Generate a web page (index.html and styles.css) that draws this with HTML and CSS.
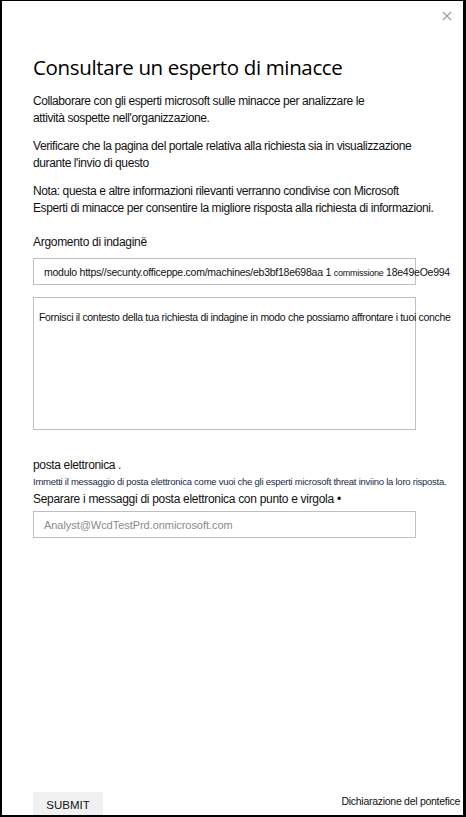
FILE: index.html
```html
<!DOCTYPE html>
<html lang="it">
<head>
<meta charset="utf-8">
<link rel="stylesheet" href="styles.css">
</head>
<body>
<div class="dialog">
  <div class="close-row">
    <svg class="close" width="10" height="10" viewBox="0 0 10 10"><path d="M1 1L9 9M9 1L1 9" stroke="#9a9a9a" stroke-width="1.1" fill="none"/></svg>
  </div>
  <h1 class="title">Consultare un esperto di minacce</h1>
  <p class="para p1">Collaborare con gli esperti microsoft sulle minacce per analizzare le<br>attività sospette nell'organizzazione.</p>
  <p class="para">Verificare che la pagina del portale relativa alla richiesta sia in visualizzazione<br>durante l'invio di questo</p>
  <p class="para">Nota: questa e altre informazioni rilevanti verranno condivise con Microsoft<br>Esperti di minacce per consentire la migliore risposta alla richiesta di informazioni.</p>
  <div class="label">Argomento di indaginë</div>
  <div class="field"><span class="field-text">modulo https//secunty.officeppe.com/machines/eb3bf18e698aa 1 <span class="tiny">commissione</span> 18e49eOe994</span></div>
  <div class="area"><span class="area-text">Fornisci il contesto della tua richiesta di indagine in modo che possiamo affrontare i tuoi conche</span></div>
  <div class="email-label">posta elettronica .</div>
  <div class="hint">Immetti il messaggio di posta elettronica come vuoi che gli esperti microsoft threat inviino la loro risposta.</div>
  <div class="sep">Separare i messaggi di posta elettronica con punto e virgola •</div>
  <div class="field email"><span class="placeholder">Analyst@WcdTestPrd.onmicrosoft.com</span></div>
  <div class="footer">
    <div class="submit">SUBMIT</div>
    <div class="privacy">Dichiarazione del pontefice</div>
  </div>
</div>
</body>
</html>
```
FILE: styles.css
```css
html, body { margin: 0; padding: 0; background: #fff; }
body { font-family: "Liberation Sans", Arial, sans-serif; color: #111; }
.dialog {
  box-sizing: border-box;
  width: 466px;
  height: 817px;
  border: 1px solid #000;
  border-left-width: 2px;
  border-right-width: 3px;
  border-bottom-width: 2px;
  padding: 0 0 0 31px;
  display: flex;
  flex-direction: column;
  overflow: hidden;
}
.close-row { display: flex; justify-content: flex-end; padding: 10px 11px 0 0; height: 12px; }
.title { font-family: "Open Sans", sans-serif; font-weight: 400; font-size: 20.5px; margin: 30px 0 0 0; line-height: 28px; letter-spacing: -0.35px; color: #000; }
.para { font-size: 12px; line-height: 16.5px; margin: 12px 0 0 0; white-space: nowrap; letter-spacing: -0.4px; }
.label { font-size: 12px; margin-top: 18px; line-height: 16px; letter-spacing: -0.3px; }
.field {
  box-sizing: border-box;
  width: 383px;
  height: 27px;
  border: 1px solid #c0c0c0;
  margin-top: 8px;
  display: flex;
  align-items: center;
  padding-left: 10px;
  white-space: nowrap;
  overflow: visible;
}
.field-text { font-size: 10.5px; letter-spacing: -0.25px; }
.tiny { font-size: 9px; }
.area {
  box-sizing: border-box;
  width: 383px;
  height: 133px;
  border: 1px solid #c0c0c0;
  margin-top: 12px;
  padding: 11px 0 0 5px;
  white-space: nowrap;
  line-height: 14px;
}
.area-text { font-size: 10.5px; letter-spacing: -0.32px; }
.email-label { font-size: 12px; margin-top: 27px; line-height: 16px; letter-spacing: -0.35px; }
.hint { font-size: 9.5px; color: #1b2a4a; margin-top: 3px; line-height: 12px; letter-spacing: -0.25px; white-space: nowrap; }
.sep { font-size: 12px; line-height: 16px; margin-top: 3px; letter-spacing: -0.3px; }
.field.email { margin-top: 4px; padding-left: 10px; }
.placeholder { font-size: 11px; color: #8a8a8a; letter-spacing: -0.05px; }
.footer { margin-top: auto; display: flex; justify-content: space-between; align-items: flex-end; padding-right: 3px; }
.submit { width: 70px; height: 23px; background: #f1f1f1; font-size: 11.5px; display: flex; align-items: center; justify-content: center; color: #111; padding-top: 2px; box-sizing: border-box; }
.privacy { font-size: 10.5px; letter-spacing: -0.28px; margin-bottom: 8px; }
```
